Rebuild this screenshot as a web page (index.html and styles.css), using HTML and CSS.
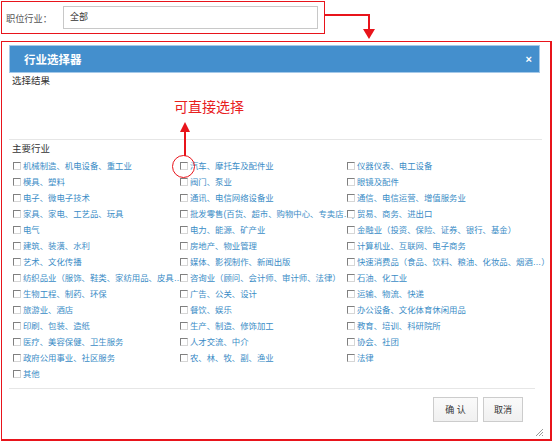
FILE: index.html
```html
<!DOCTYPE html>
<html lang="zh">
<head>
<meta charset="utf-8">
<title>行业选择器</title>
<link rel="stylesheet" href="styles.css">
</head>
<body>
<div class="top-box">
  <span class="label">职位行业：</span>
  <div class="input">全部</div>
</div>
<div class="frame">
  <div class="dialog">
    <div class="header"><span class="title">行业选择器</span><span class="close">×</span></div>
    <div class="result"><div class="sec-label">选择结果</div></div>
    <div class="main">
      <div class="sec-label">主要行业</div>
      <ul class="grid">
        <li><span class="cb"></span>机械制造、机电设备、重工业</li>
        <li><span class="cb"></span>汽车、摩托车及配件业</li>
        <li><span class="cb"></span>仪器仪表、电工设备</li>
        <li><span class="cb"></span>模具、塑料</li>
        <li><span class="cb"></span>阀门、泵业</li>
        <li><span class="cb"></span>眼镜及配件</li>
        <li><span class="cb"></span>电子、微电子技术</li>
        <li><span class="cb"></span>通讯、电信网络设备业</li>
        <li><span class="cb"></span>通信、电信运营、增值服务业</li>
        <li><span class="cb"></span>家具、家电、工艺品、玩具</li>
        <li><span class="cb"></span>批发零售(百货、超市、购物中心、专卖店…)</li>
        <li><span class="cb"></span>贸易、商务、进出口</li>
        <li><span class="cb"></span>电气</li>
        <li><span class="cb"></span>电力、能源、矿产业</li>
        <li><span class="cb"></span>金融业（投资、保险、证券、银行、基金）</li>
        <li><span class="cb"></span>建筑、装潢、水利</li>
        <li><span class="cb"></span>房地产、物业管理</li>
        <li><span class="cb"></span>计算机业、互联网、电子商务</li>
        <li><span class="cb"></span>艺术、文化传播</li>
        <li><span class="cb"></span>媒体、影视制作、新闻出版</li>
        <li><span class="cb"></span>快速消费品（食品、饮料、粮油、化妆品、烟酒…）</li>
        <li><span class="cb"></span>纺织品业（服饰、鞋类、家纺用品、皮具…）</li>
        <li><span class="cb"></span>咨询业（顾问、会计师、审计师、法律）</li>
        <li><span class="cb"></span>石油、化工业</li>
        <li><span class="cb"></span>生物工程、制药、环保</li>
        <li><span class="cb"></span>广告、公关、设计</li>
        <li><span class="cb"></span>运输、物流、快递</li>
        <li><span class="cb"></span>旅游业、酒店</li>
        <li><span class="cb"></span>餐饮、娱乐</li>
        <li><span class="cb"></span>办公设备、文化体育休闲用品</li>
        <li><span class="cb"></span>印刷、包装、造纸</li>
        <li><span class="cb"></span>生产、制造、修饰加工</li>
        <li><span class="cb"></span>教育、培训、科研院所</li>
        <li><span class="cb"></span>医疗、美容保健、卫生服务</li>
        <li><span class="cb"></span>人才交流、中介</li>
        <li><span class="cb"></span>协会、社团</li>
        <li><span class="cb"></span>政府公用事业、社区服务</li>
        <li><span class="cb"></span>农、林、牧、副、渔业</li>
        <li><span class="cb"></span>法律</li>
        <li><span class="cb"></span>其他</li>
      </ul>
    </div>
    <div class="footer">
      <button class="btn btn-ok">确 认</button>
      <button class="btn btn-cancel">取消</button>
    </div>
    <svg class="grip" width="9" height="9" viewBox="0 0 9 9">
      <path d="M8 1 L1 8 M8 4 L4 8 M8 7 L7 8" stroke="#999" stroke-width="1"/>
    </svg>
  </div>
</div>
<svg class="annot" width="553" height="443" viewBox="0 0 553 443">
  <polyline points="325,15 369,15 369,30" fill="none" stroke="#e8141b" stroke-width="2"/>
  <polygon points="363,29 375,29 369,39" fill="#e8141b"/>
  <line x1="185" y1="156" x2="185" y2="129" stroke="#e8141b" stroke-width="2"/>
  <polygon points="180,132 190,132 185,122" fill="#e8141b"/>
  <circle cx="183.5" cy="166.5" r="11" fill="none" stroke="#e8141b" stroke-width="1"/>
</svg>
<div class="hint">可直接选择</div>
</body>
</html>
```
FILE: styles.css
```css
body {
  margin: 0;
  width: 553px;
  height: 443px;
  overflow: hidden;
  position: relative;
  background: #fff;
  font-family: "Liberation Sans", "Noto Sans CJK SC", sans-serif;
}

.top-box {
  box-sizing: border-box;
  margin: 1px 0 0 1px;
  width: 324px;
  height: 33px;
  border: 1px solid #e8141b;
  display: flex;
  align-items: center;
  padding-left: 4px;
}

.label {
  width: 57px;
  font-size: 9.2px;
  color: #555;
}

.input {
  box-sizing: border-box;
  width: 255px;
  height: 23px;
  border: 1px solid #c8c8c8;
  padding-left: 6px;
  font-size: 9px;
  line-height: 21px;
  color: #333;
}

.frame {
  box-sizing: border-box;
  margin: 7px 0 0 1px;
  width: 551px;
  height: 400px;
  border-style: solid;
  border-color: #e8141b;
  border-width: 1px 2px 2px 1px;
  padding: 3px 0 0 7px;
}

.dialog {
  position: relative;
  width: 537px;
  height: 392px;
}

.header {
  box-sizing: border-box;
  width: 531px;
  height: 28px;
  background: #448fcd;
  border: 1px solid #a5c9e9;
  display: flex;
  align-items: center;
  justify-content: space-between;
  padding: 0 7px 0 14px;
  color: #fff;
}

.title {
  font-size: 11.5px;
  font-weight: bold;
}

.close {
  font-size: 11px;
  font-weight: bold;
}

.result {
  height: 66px;
  margin-right: 4px;
  border-bottom: 1px solid #e6e6e6;
  padding-top: 2px;
  box-sizing: border-box;
  height: 67px;
}

.sec-label {
  font-size: 9.5px;
  line-height: 12px;
  color: #333;
  padding-left: 3px;
}

.main {
  padding-top: 3px;
}

.grid {
  list-style: none;
  margin: 2px 0 0 0;
  padding: 0 0 0 4px;
  display: grid;
  grid-template-columns: repeat(3, 167px);
}

.grid li {
  display: flex;
  align-items: center;
  height: 16px;
  white-space: nowrap;
  font-size: 8.4px;
  color: #3a8cc6;
}

.cb {
  flex: none;
  box-sizing: border-box;
  width: 8px;
  height: 8px;
  margin: 2px 2px 0 0;
  border: 1px solid;
  border-color: #808080 #d6d6d6 #d6d6d6 #808080;
  background: #fff;
}

.footer {
  margin: 7px 11px 0 0;
  border-top: 1px solid #e6e6e6;
  padding: 8px 12px 0 0;
  display: flex;
  justify-content: flex-end;
  gap: 5px;
}

.btn {
  box-sizing: border-box;
  height: 25px;
  border: 1px solid #cccccc;
  background: linear-gradient(#fafafa, #f0f0f0);
  font-family: "Liberation Sans", "Noto Sans CJK SC", sans-serif;
  font-size: 9px;
  color: #333;
  padding: 0;
}

.btn-ok { width: 45px; }
.btn-cancel { width: 40px; }

.grip {
  position: absolute;
  right: 2px;
  bottom: 0;
}

.annot {
  position: absolute;
  left: 0;
  top: 0;
  pointer-events: none;
}

.hint {
  position: absolute;
  left: 174px;
  top: 98px;
  font-size: 14px;
  line-height: 18px;
  color: #e8201e;
  white-space: nowrap;
}
```
